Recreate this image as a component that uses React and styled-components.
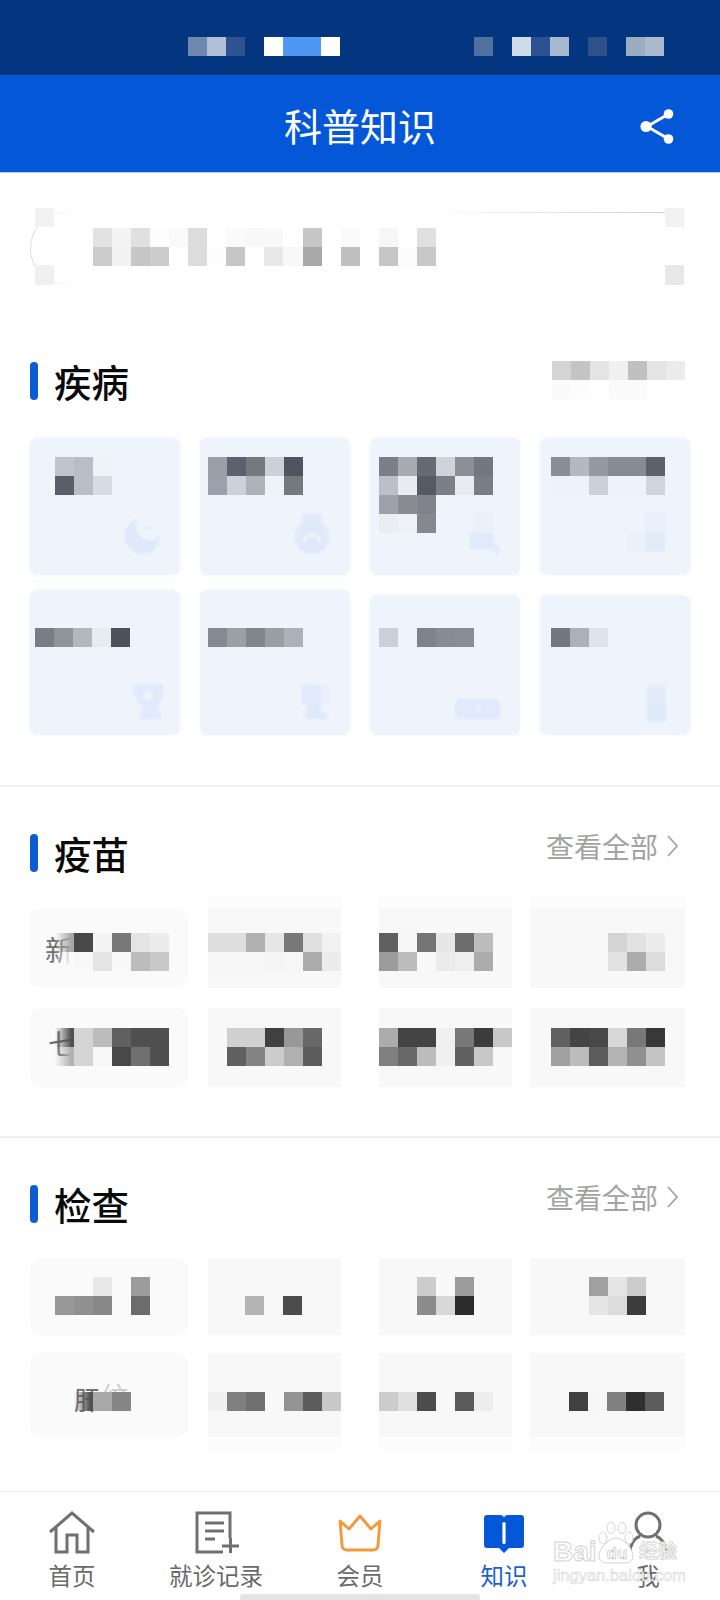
import React from 'react';
import styled, { createGlobalStyle } from 'styled-components';

const GlobalStyle = createGlobalStyle`
  html, body {
    margin: 0;
    padding: 0;
    background: #fff;
  }
  * {
    box-sizing: border-box;
  }
`;

const Page = styled.div`
  position: relative;
  display: flex;
  flex-direction: column;
  width: 720px;
  height: 1600px;
  overflow: hidden;
  background: #fff;
  font-family: 'Noto Sans CJK SC', 'Noto Sans', sans-serif;
`;

const StatusBar = styled.div`
  height: 75px;
  padding: 37px 0 0 188px;
  background: #03367f;
`;

const Header = styled.header`
  position: relative;
  display: flex;
  align-items: center;
  justify-content: center;
  height: 98px;
  padding-top: 3px;
  background: #0458d8;
  border-bottom: 1px solid #a9d2f7;
`;

const HeaderTitle = styled.h1`
  margin: 0;
  color: #fff;
  font-size: 38px;
  font-weight: 400;
  line-height: 1;
`;

const ShareButton = styled.svg`
  position: absolute;
  top: 33px;
  right: 45px;
  width: 36px;
  height: 37px;
`;

const SearchBox = styled.div`
  position: relative;
  width: 655px;
  height: 73px;
  margin: 39px 0 0 30px;
  padding: 15px 0 0 62px;
  border: 1px solid transparent;
  border-radius: 36px 24px 24px 36px;
  background:
    linear-gradient(#fff, #fff) padding-box,
    linear-gradient(to top, #fff 72%, transparent 100%) right / 50% 100% no-repeat border-box,
    linear-gradient(90deg, #dcdcdc 0, #fff 7%, #fff 60%, #c8c8c8 100%) border-box;
`;

const SearchCorner = styled.span`
  position: absolute;
  width: 19px;
  height: ${p => (p.$bottom ? 20 : 19)}px;
  background: ${p => p.$color};
  ${p => (p.$bottom ? 'bottom: -1px;' : 'top: -5px;')}
  ${p => (p.$right ? 'right: 0;' : 'left: 4px;')}
`;

const Section = styled.section`
  padding: ${p => p.$top}px 0 ${p => p.$bottom}px;
  border-bottom: ${p => (p.$line ? '2px solid #f0f0f0' : 'none')};
`;

const SectionHead = styled.div`
  display: flex;
  align-items: flex-start;
  justify-content: space-between;
  height: 39px;
  padding: 0 ${p => p.$right}px 0 30px;
`;

const HeadLeft = styled.div`
  display: flex;
  align-items: center;
  gap: 16px;
  height: 39px;
`;

const AccentBar = styled.span`
  width: 8px;
  height: 38px;
  border-radius: 4px;
  background: #0b5bd3;
`;

const SectionTitle = styled.h2`
  margin: 0;
  color: #0a0a0a;
  font-size: 37.5px;
  font-weight: 500;
  line-height: 39px;
`;

const ViewAll = styled.a`
  display: flex;
  align-items: center;
  gap: 9px;
  height: 26px;
  color: #a3a3a3;
  font-size: 28px;
  line-height: 26px;
`;

const TileRow = styled.div`
  display: flex;
  align-items: flex-end;
  height: ${p => p.$h}px;
  margin-top: ${p => p.$gap}px;
  padding-left: 30px;
`;

const Tile = styled.div`
  position: relative;
  flex: none;
  width: ${p => p.$w}px;
  height: ${p => p.$h}px;
  margin-left: ${p => p.$ml || 0}px;
  padding: ${p => p.$y}px 0 0 ${p => p.$x}px;
  background: ${p => p.$bg};
  border-radius: ${p => p.$radius ?? 8}px;
  box-shadow: ${p => (p.$halo ? `0 ${p.$halo}px 0 #fcfcfc` : 'none')};
`;

const DiseaseTile = styled(Tile)`
  box-shadow: 0 0 4px 2px #f8faff;
`;

const Mosaic = styled.div`
  position: relative;
  z-index: 1;
  display: grid;
  grid-template-columns: repeat(${p => p.$cols}, 19.05px);
  grid-auto-rows: 19.05px;
  width: max-content;
`;

const Cell = styled.span`
  background: ${p =>
    p.$fade ? `linear-gradient(90deg, transparent 0, ${p.$color} 85%)` : p.$color};
`;

const GhostText = styled.span`
  position: absolute;
  top: ${p => p.$top}px;
  left: ${p => p.$left}px;
  color: ${p => p.$color || '#6f6f6f'};
  font-size: ${p => p.$size || 28}px;
  line-height: 1.1;
  white-space: nowrap;
`;

const Illustration = styled.svg`
  position: absolute;
  right: ${p => p.$right}px;
  bottom: ${p => p.$bottom}px;
  width: ${p => p.$w}px;
  height: ${p => p.$h}px;
  filter: blur(0.8px);
`;

const BottomNav = styled.nav`
  display: grid;
  grid-template-columns: repeat(5, 144px);
  height: 109px;
  margin-top: auto;
  border-top: 1px solid #ececec;
`;

const NavItem = styled.div`
  display: flex;
  flex-direction: column;
  align-items: center;
  padding-top: 19px;
  color: ${p => (p.$active ? '#1a62c9' : '#6a6a6a')};
  font-size: 23.5px;
  line-height: 30px;
`;

const NavIcon = styled.svg`
  width: 48px;
  height: 44px;
  margin-bottom: 5px;
`;

const HomeIndicator = styled.span`
  position: absolute;
  bottom: 0;
  left: 240px;
  width: 240px;
  height: 6px;
  border-radius: 3px 3px 0 0;
  background: #e4e4e4;
`;

const Watermark = styled.div`
  position: absolute;
  left: 553px;
  top: 1522px;
  width: 130px;
  color: #fff;
  font-family: 'Liberation Sans', 'Noto Sans CJK SC', sans-serif;
`;

const WatermarkLogo = styled.div`
  display: flex;
  align-items: flex-end;
  height: 42px;
  white-space: nowrap;
`;

const WatermarkBrand = styled.span`
  width: 42px;
  font-size: 28px;
  font-weight: 700;
  line-height: 25px;
  -webkit-text-stroke: 1px #d2d2d2;
`;

const WatermarkPaw = styled.span`
  position: relative;
  display: flex;
  justify-content: center;
  width: 44px;
  height: 42px;
  padding-top: 23px;
  font-size: 17px;
  font-weight: 700;
  line-height: 17px;
  color: #fff;
  -webkit-text-stroke: 0.7px #c4c4c4;
  svg {
    position: absolute;
    top: 0;
    left: 2px;
    width: 38px;
    height: 42px;
  }
  b {
    position: relative;
  }
`;

const WatermarkName = styled.span`
  font-size: 19px;
  font-weight: 700;
  line-height: 24px;
  -webkit-text-stroke: 0.8px #d2d2d2;
`;

const WatermarkUrl = styled.div`
  margin-top: 4px;
  font-size: 16.5px;
  line-height: 15px;
  white-space: nowrap;
  -webkit-text-stroke: 0.6px #d6d6d6;
`;

const Pixels = ({ rows }) => {
  const parsed = rows.map(r => r.split(' '));
  const cols = Math.max(...parsed.map(r => r.length));
  return (
    <Mosaic $cols={cols}>
      {parsed.flatMap((row, i) =>
        row.map((t, j) => {
          const fade = t.startsWith('~');
          const hex = t.replace('~', '');
          const color = hex === '-' ? 'transparent' : `#${hex.length === 2 ? hex + hex + hex : hex}`;
          return <Cell key={`${i}-${j}`} $color={color} $fade={fade} />;
        })
      )}
    </Mosaic>
  );
};

const Moon = () => (
  <Illustration $right={21} $bottom={21} $w={34} $h={40} viewBox="0 0 34 40">
    <path d="M13 3C5 7 0 13 0 22c0 10 7 18 17 18s17-8 17-17c-3 3-7 4-11 3-7-1-12-8-12-14 0-3 1-6 2-9z" fill="#dfe9fa" />
    <path d="M20 14h9" stroke="#e4ecfb" strokeWidth="2" />
  </Illustration>
);

const Thermo = () => (
  <Illustration $right={21} $bottom={21} $w={34} $h={40} viewBox="0 0 34 40">
    <rect x="7" y="0" width="20" height="18" fill="#e2eafa" />
    <circle cx="17" cy="23" r="17" fill="#dfe9fa" />
    <path d="M9 28a8 7 0 0 1 16 0" fill="none" stroke="#eef3fc" strokeWidth="3" />
  </Illustration>
);

const Lung = () => (
  <Illustration $right={20} $bottom={20} $w={30} $h={42} viewBox="0 0 30 42">
    <rect x="4" y="0" width="19" height="20" fill="#ebf0fb" />
    <path d="M0 20h22l2 10 6 6-3 6-6-6H0z" fill="#e0eafa" />
  </Illustration>
);

const Kidney = () => (
  <Illustration $right={25} $bottom={22} $w={38} $h={40} viewBox="0 0 38 40">
    <rect x="19" y="0" width="19" height="20" fill="#e8eefb" />
    <rect x="0" y="20" width="19" height="18" fill="#ebf0fb" />
    <rect x="19" y="20" width="19" height="18" fill="#e2ebfa" />
  </Illustration>
);

const Bust = () => (
  <Illustration $right={15} $bottom={16} $w={34} $h={34} viewBox="0 0 34 34">
    <path d="M2 0h30v12c-1 5-5 8-7 10l4 6 1 6H8l3-8 2-4C7 19 2 12 2 0z" fill="#e0eafa" />
    <circle cx="17" cy="10" r="5" fill="#eef3fc" />
  </Illustration>
);

const Body = () => (
  <Illustration $right={20} $bottom={16} $w={28} $h={34} viewBox="0 0 28 34">
    <rect x="0" y="0" width="19" height="20" fill="#e1eafa" />
    <rect x="19" y="0" width="9" height="20" fill="#ebf0fb" />
    <path d="M4 20h14v4l8 6-2 4H4l-2-4 4-4z" fill="#deE9fa" />
  </Illustration>
);

const Pad = () => (
  <Illustration $right={20} $bottom={16} $w={45} $h={20} viewBox="0 0 45 20">
    <rect x="0" y="0" width="45" height="20" rx="5" fill="#e1eafa" />
    <path d="M20 5h6l-3 8z" fill="#eaf1fc" />
  </Illustration>
);

const Vial = () => (
  <Illustration $right={24} $bottom={13} $w={19} $h={37} viewBox="0 0 19 37">
    <rect x="0" y="0" width="19" height="37" rx="2" fill="#e3ebfb" />
    <rect x="0" y="19" width="19" height="18" rx="2" fill="#deE9fa" />
  </Illustration>
);

const SectionHeading = ({ title, rows }) => (
  <SectionHead $right={rows ? 35 : 42}>
    <HeadLeft>
      <AccentBar />
      <SectionTitle>{title}</SectionTitle>
    </HeadLeft>
    {rows ? (
      <Pixels rows={rows} />
    ) : (
      <ViewAll>
        查看全部
        <svg width="11" height="22" viewBox="0 0 11 22">
          <path d="M1 1l9 10-9 10" fill="none" stroke="#a3a3a3" strokeWidth="1.8" />
        </svg>
      </ViewAll>
    )}
  </SectionHead>
);

const BLUE = '#eef3fc';
const GREY = '#f8f8f8';
const FIRST = '#fafafa';

export default function App() {
  return (
    <Page>
      <GlobalStyle />
      <StatusBar>
        <Pixels rows={['6f88ae b0bfd5 2f5390 - fff 4f97f5 4f97f5 fff - - - - - - - 50719f - d0dbe8 2c5190 a8b8d0 - 2e5288 - 9babc0 aab9cd']} />
      </StatusBar>
      <Header>
        <HeaderTitle>科普知识</HeaderTitle>
        <ShareButton viewBox="0 0 36 37">
          <path d="M28 7L8 18.5 28 30" fill="none" stroke="#fff" strokeWidth="3" />
          <circle cx="29.5" cy="6" r="4.8" fill="#fff" />
          <circle cx="7" cy="18.5" r="5.6" fill="#fff" />
          <circle cx="29.5" cy="31" r="4.8" fill="#fff" />
        </ShareButton>
      </Header>

      <SearchBox>
        <SearchCorner $color="#f2f2f2" />
        <SearchCorner $color="#f0f0f0" $bottom />
        <SearchCorner $color="#f1f1f1" $right />
        <SearchCorner $color="#e8e8e8" $right $bottom />
        <Pixels
          rows={[
            'e2 f4 e0 fd fa dc ff fa f8 f9 ff c6 ff fa ff f6 ff e0',
            'cc f2 c6 cc ff dc fd c6 ff e8 f8 a8 ff c0 ff c6 fc c8'
          ]}
        />
      </SearchBox>

      <Section $top={76} $bottom={50} $line>
        <SectionHeading title="疾病" rows={['d4 c4 e4 f0 c0 e4 ec', 'fa fc fe fa fa ff ff']} />
        <TileRow $h={137} $gap={38}>
          <DiseaseTile $w={150} $h={137} $x={25} $y={19} $bg={BLUE}>
            <Pixels rows={['c0c4cc b8bec6 eef1f8', '585e6a b8bec6 d6dbe4']} />
            <Moon />
          </DiseaseTile>
          <DiseaseTile $w={150} $h={137} $ml={20} $x={8} $y={19} $bg={BLUE}>
            <Pixels rows={['9c9fa8 5c6070 74787f ccd0d8 505460', '9ca0ac ccd1db aeb2bb edf1f8 74787f']} />
            <Thermo />
          </DiseaseTile>
          <DiseaseTile $w={150} $h={137} $ml={20} $x={9} $y={19} $bg={BLUE}>
            <Pixels
              rows={[
                '7c7f88 a8abb3 666a74 d0d3da 8c8f97 747780',
                'bcbfc7 e8ebf2 565a65 7c7f88 e8ebf2 7a7d86',
                '9ea1a9 8a8c93 80838a - - -',
                'eaedf4 eef1f8 858890 - - -'
              ]}
            />
            <Lung />
          </DiseaseTile>
          <DiseaseTile $w={150} $h={137} $ml={20} $x={11} $y={19} $bg={BLUE}>
            <Pixels rows={['8a8d96 b4b8c0 9699a2 888b93 888b93 5e616c', 'eef2fb eef2fb ccd0da eef2fb eef2fb d0d4dc']} />
            <Kidney />
          </DiseaseTile>
        </TileRow>
        <TileRow $h={145} $gap={15}>
          <DiseaseTile $w={150} $h={145} $x={5} $y={38} $bg={BLUE}>
            <Pixels rows={['7a7d85 90939a b4b7be e8ebf2 4e515c']} />
            <Bust />
          </DiseaseTile>
          <DiseaseTile $w={150} $h={145} $ml={20} $x={8} $y={38} $bg={BLUE}>
            <Pixels rows={['868991 9c9fa6 82858c 9a9da4 adb0b8']} />
            <Body />
          </DiseaseTile>
          <DiseaseTile $w={150} $h={140} $ml={20} $x={9} $y={33} $bg={BLUE}>
            <Pixels rows={['ccd0d8 - 80838c 888b93 8a8d95']} />
            <Pad />
          </DiseaseTile>
          <DiseaseTile $w={150} $h={140} $ml={20} $x={11} $y={33} $bg={BLUE}>
            <Pixels rows={['74777f adb0b8 e0e3ec']} />
            <Vial />
          </DiseaseTile>
        </TileRow>
      </Section>

      <Section $top={46} $bottom={49} $line>
        <SectionHeading title="疫苗" />
        <TileRow $h={80} $gap={36}>
          <Tile $w={158} $h={80} $x={25} $y={25} $bg={FIRST} $radius={10}>
            <GhostText $top={26} $left={15}>新</GhostText>
            <Pixels rows={['~a8a8a8 484848 f4 78 e4 ec', '~fafafa f8 e4 f8 bc c8']} />
          </Tile>
          <Tile $w={133} $h={80} $ml={20} $x={0} $y={25} $bg={GREY} $radius={0} $halo={-13}>
            <Pixels rows={['de de b0 e6 78 e0 f2', 'f6 f6 f6 f5 f6 ac ec']} />
          </Tile>
          <Tile $w={133} $h={80} $ml={38} $x={0} $y={25} $bg={GREY} $radius={0} $halo={-13}>
            <Pixels rows={['60 f6 74 e6 6c bc', '9c bc f8 eb ef ac']} />
          </Tile>
          <Tile $w={155} $h={80} $ml={18} $x={78} $y={25} $bg={GREY} $radius={0} $halo={-13}>
            <Pixels rows={['d4 e2 ec', 'e2 ac dc']} />
          </Tile>
        </TileRow>
        <TileRow $h={79} $gap={20}>
          <Tile $w={158} $h={79} $x={25} $y={20} $bg={FIRST} $radius={10}>
            <GhostText $top={20} $left={18}>七</GhostText>
            <Pixels rows={['~505050 d4 bc 60 50 50', '~b0b0b0 d4 f8 48 70 50']} />
          </Tile>
          <Tile $w={133} $h={79} $ml={20} $x={19} $y={20} $bg={GREY} $radius={0}>
            <Pixels rows={['d0 d0 40 98 68', '60 84 cc b0 5c']} />
          </Tile>
          <Tile $w={133} $h={79} $ml={38} $x={0} $y={20} $bg={GREY} $radius={0}>
            <Pixels rows={['ac 44 44 f0 78 3c c8', '80 68 bc f0 60 c8 f8']} />
          </Tile>
          <Tile $w={155} $h={79} $ml={18} $x={21} $y={20} $bg={GREY} $radius={0}>
            <Pixels rows={['60 44 48 d8 78 38', 'a0 bc 5c b4 90 c4']} />
          </Tile>
        </TileRow>
      </Section>

      <Section $top={46} $bottom={0}>
        <SectionHeading title="检查" />
        <TileRow $h={77} $gap={35}>
          <Tile $w={158} $h={77} $x={25} $y={19} $bg={FIRST} $radius={10}>
            <Pixels rows={['- - e8 - 9c', '98 90 88 - 6c']} />
          </Tile>
          <Tile $w={133} $h={77} $ml={20} $x={37} $y={19} $bg={GREY} $radius={0}>
            <Pixels rows={['- - -', 'b4 - 4c']} />
          </Tile>
          <Tile $w={133} $h={77} $ml={38} $x={38} $y={19} $bg={GREY} $radius={0}>
            <Pixels rows={['cc f8 9c', '8c d8 2c']} />
          </Tile>
          <Tile $w={155} $h={77} $ml={18} $x={59} $y={19} $bg={GREY} $radius={0}>
            <Pixels rows={['a0 e4 cc', 'e4 dc 3c']} />
          </Tile>
        </TileRow>
        <TileRow $h={84} $gap={18}>
          <Tile $w={158} $h={84} $x={44} $y={39} $bg={FIRST} $radius={10}>
            <GhostText $top={32} $left={44} $size={26}>肝</GhostText>
            <GhostText $top={28} $left={72} $size={26} $color="#cccccc">纹</GhostText>
            <Pixels rows={['~505050 a8 85']} />
          </Tile>
          <Tile $w={133} $h={84} $ml={20} $x={0} $y={39} $bg={GREY} $radius={0} $halo={14}>
            <Pixels rows={['f0 80 70 - 94 5c c8']} />
          </Tile>
          <Tile $w={133} $h={84} $ml={38} $x={0} $y={39} $bg={GREY} $radius={0} $halo={14}>
            <Pixels rows={['cc e0 4c - 5a ed']} />
          </Tile>
          <Tile $w={155} $h={84} $ml={18} $x={39} $y={39} $bg={GREY} $radius={0} $halo={14}>
            <Pixels rows={['40 f6 80 2f 5c']} />
          </Tile>
        </TileRow>
      </Section>

      <BottomNav>
        <NavItem>
          <NavIcon viewBox="0 0 48 44" fill="none" stroke="#707070" strokeWidth="3">
            <path d="M2 21L24 2l22 19" />
            <path d="M8 17v24h11V24h10v17h11V17" />
          </NavIcon>
          首页
        </NavItem>
        <NavItem>
          <NavIcon viewBox="0 0 48 44" fill="none" stroke="#707070" strokeWidth="3">
            <path d="M38 27V2H5v39h26" />
            <path d="M13 12h19M13 20h19M13 28h10" />
            <path d="M30 35h17M38.5 27v15" />
          </NavIcon>
          就诊记录
        </NavItem>
        <NavItem>
          <NavIcon viewBox="0 0 48 44" fill="none" stroke="#f29a3e" strokeWidth="3" strokeLinejoin="round">
            <path d="M4 10l9 8L24 5l11 13 9-8-2 24c0 3-2 5-5 5H11c-3 0-5-2-5-5z" />
          </NavIcon>
          会员
        </NavItem>
        <NavItem $active>
          <NavIcon viewBox="0 0 48 44">
            <path d="M7 4h13c2 0 4 1 4 3 0-2 2-3 4-3h13c2 0 3 1 3 3v27c0 2-1 3-3 3H29l-5 5-5-5H7c-2 0-3-1-3-3V7c0-2 1-3 3-3z" fill="#0458d8" />
            <rect x="22.4" y="11" width="3.2" height="22" rx="1.5" fill="#fff" />
          </NavIcon>
          知识
        </NavItem>
        <NavItem>
          <NavIcon viewBox="0 0 48 44" fill="none" stroke="#707070" strokeWidth="3">
            <circle cx="24" cy="14" r="12" />
            <path d="M16 25C9 28 6 34 6 42M32 25c7 3 10 9 10 17" />
          </NavIcon>
          我
        </NavItem>
      </BottomNav>
      <HomeIndicator />

      <Watermark>
        <WatermarkLogo>
          <WatermarkBrand>Bai</WatermarkBrand>
          <WatermarkPaw>
            <svg viewBox="0 0 38 42" fill="#fff" stroke="#d4d4d4" strokeWidth="1">
              <ellipse cx="6" cy="16" rx="4" ry="6" />
              <ellipse cx="14" cy="6" rx="4" ry="5.5" />
              <ellipse cx="25" cy="6" rx="4" ry="5.5" />
              <ellipse cx="32" cy="16" rx="4" ry="6" />
              <path d="M19 16c7 0 17 10 17 18 0 5-4 7-9 7H11c-5 0-9-2-9-7 0-8 10-18 17-18z" />
            </svg>
            <b>du</b>
          </WatermarkPaw>
          <WatermarkName>经验</WatermarkName>
        </WatermarkLogo>
        <WatermarkUrl>jingyan.baidu.com</WatermarkUrl>
      </Watermark>
    </Page>
  );
}
